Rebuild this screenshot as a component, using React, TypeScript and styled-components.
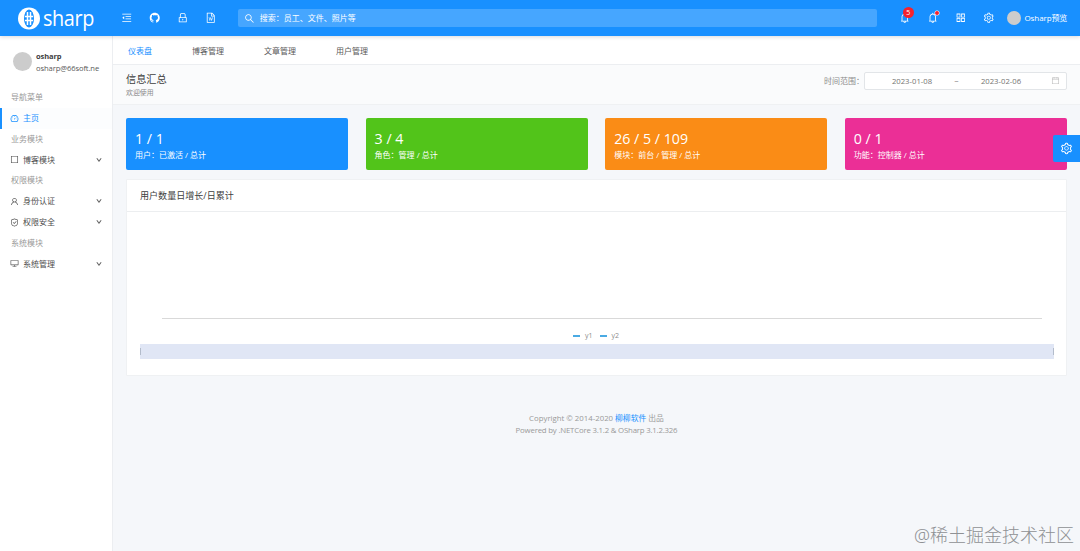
import React from "react";
import styled, { createGlobalStyle } from "styled-components";
import {
  AiOutlineMenuFold,
  AiOutlineGithub,
  AiOutlineLock,
  AiOutlineFileWord,
  AiOutlineSearch,
  AiOutlineBell,
  AiOutlineAppstore,
  AiOutlineSetting,
  AiOutlineDashboard,
  AiOutlineBorder,
  AiOutlineUser,
  AiOutlineSafety,
  AiOutlineDesktop,
  AiOutlineDown,
  AiOutlineCalendar,
} from "react-icons/ai";

const GlobalStyle = createGlobalStyle`
  * { box-sizing: border-box; }
  body {
    margin: 0;
    background: #f5f7fa;
    color: #595959;
    font: 8px/12px "Open Sans", "Noto Sans CJK SC", sans-serif;
    overflow: hidden;
  }
  svg { display: block; flex: none; }
`;

const Page = styled.div`
  display: flex;
  flex-direction: column;
  width: 1080px;
  height: 551px;
`;

const Header = styled.header`
  display: flex;
  align-items: center;
  flex: none;
  height: 36px;
  background: #1890ff;
  color: #fff;
  position: relative;
  z-index: 2;
  box-shadow: 0 1px 4px rgba(0, 21, 41, 0.16);
`;

const Brand = styled.div`
  display: flex;
  align-items: center;
  width: 112px;
  height: 36px;
  padding-left: 18px;
`;

const BrandName = styled.span`
  margin: -3px 0 0 3px;
  font: 22px/30px "Open Sans", sans-serif;
  letter-spacing: -0.4px;
  transform: scaleX(0.9);
  transform-origin: left center;
`;

const IconRow = styled.div`
  display: flex;
  align-items: center;
`;

const IconCell = styled.div`
  position: relative;
  display: flex;
  align-items: center;
  justify-content: center;
  width: 28.2px;
  height: 36px;
  padding-left: 1px;
`;

const SearchBox = styled.div`
  display: flex;
  align-items: center;
  gap: 5px;
  width: 639px;
  height: 18px;
  margin: 0 13px 0 13px;
  padding-left: 6px;
  background: #46a6ff;
  border-radius: 2px;
`;

const CountBadge = styled.span`
  position: absolute;
  left: 13px;
  top: 7px;
  width: 11px;
  height: 11px;
  border-radius: 50%;
  background: #f5222d;
  font-size: 7px;
  line-height: 11px;
  text-align: center;
`;

const DotBadge = styled.span`
  position: absolute;
  left: 17px;
  top: 11px;
  width: 4px;
  height: 4px;
  border-radius: 50%;
  background: #f5222d;
  box-shadow: 0 0 0 0.5px #fff;
`;

const Avatar = styled.span<{ $size: number }>`
  flex: none;
  width: ${(p) => p.$size}px;
  height: ${(p) => p.$size}px;
  border-radius: 50%;
  background: #ccc;
`;

const Account = styled.div`
  display: flex;
  align-items: center;
  gap: 4px;
  margin-left: 4px;
  white-space: nowrap;
  span { letter-spacing: -0.1px; }
`;

const Body = styled.div`
  display: flex;
  flex: 1;
  min-height: 0;
`;

const Sidebar = styled.aside`
  flex: none;
  width: 113px;
  background: #fff;
  border-right: 1px solid #eceef1;
`;

const Profile = styled.div`
  display: flex;
  align-items: center;
  gap: 4px;
  height: 51px;
  padding-left: 13px;
  white-space: nowrap;
`;

const ProfileText = styled.div`
  display: flex;
  flex-direction: column;
  font-size: 7.6px;
  letter-spacing: -0.1px;
  b { color: #404040; font-size: 7.5px; }
`;

const MenuGroup = styled.div`
  height: 20.8px;
  padding-left: 11px;
  line-height: 20.8px;
  color: #999;
`;

const MenuItem = styled.div<{ $active?: boolean }>`
  display: flex;
  align-items: center;
  gap: 4px;
  height: 20.8px;
  padding: 0 10px 0 ${(p) => (p.$active ? 8 : 10)}px;
  border-left: ${(p) => (p.$active ? "2px solid #1890ff" : "0")};
  background: ${(p) => (p.$active ? "#fcfdfe" : "#fff")};
  color: ${(p) => (p.$active ? "#1890ff" : "#4d4d4d")};
  span { flex: 1; }
`;

const Main = styled.main`
  flex: 1;
  min-width: 0;
`;

const Tabs = styled.nav`
  display: flex;
  height: 29px;
  padding-left: 15px;
  background: #fff;
  border-bottom: 1px solid #eceef1;
`;

const Tab = styled.span<{ $active?: boolean; $width: number }>`
  width: ${(p) => p.$width}px;
  line-height: 29px;
  color: ${(p) => (p.$active ? "#1890ff" : "#595959")};
`;

const TitleBar = styled.section`
  display: flex;
  justify-content: space-between;
  height: 40px;
  padding: 6px 13px 0;
  background: #fafbfc;
  border-bottom: 1px solid #eff1f3;
`;

const Title = styled.h1`
  margin: 0;
  font-size: 10.2px;
  line-height: 17px;
  font-weight: 400;
  color: #404040;
`;

const Subtitle = styled.p`
  margin: 0;
  font-size: 6.9px;
  line-height: 10px;
  color: #8c8c8c;
`;

const Range = styled.div`
  display: flex;
  align-items: center;
  height: 19px;
  color: #8c8c8c;
`;

const RangeInput = styled.div`
  display: grid;
  grid-template-columns: 82px 7px 82px 1fr;
  align-items: center;
  width: 203px;
  height: 18px;
  padding: 0 6px;
  background: #fff;
  border: 1px solid #e2e5e8;
  border-radius: 2px;
  text-align: center;
  font-size: 7.7px;
  color: #737373;
  svg { justify-self: end; color: #bfbfbf; }
`;

const Content = styled.div`
  padding: 13px 13px 0;
`;

const Stats = styled.div`
  display: grid;
  grid-template-columns: repeat(4, 1fr);
  gap: 17.4px;
`;

const StatCard = styled.div<{ $color: string }>`
  height: 52px;
  padding: 11px 9px 0;
  border-radius: 2px;
  background: ${(p) => p.$color};
  color: #fff;
`;

const StatValue = styled.div`
  font-size: 14.2px;
  line-height: 20px;
`;

const Panel = styled.section`
  height: 197px;
  margin-top: 9px;
  background: #fff;
  border: 1px solid #eff1f3;
  border-radius: 1px;
`;

const PanelTitle = styled.h2`
  height: 32px;
  margin: 0;
  padding-left: 13px;
  border-bottom: 1px solid #eceef0;
  font-size: 9.05px;
  font-weight: 400;
  line-height: 32px;
  color: #404040;
`;

const PlotArea = styled.div`
  height: 107px;
  margin: 0 24px 0 35px;
  border-bottom: 1px solid #d9d9d9;
`;

const Legend = styled.div`
  display: flex;
  justify-content: center;
  gap: 7px;
  height: 25px;
  padding: 11px 1px 0 0;
  font-size: 7px;
  line-height: 12px;
  color: #8c8c8c;
`;

const LegendItem = styled.span`
  display: flex;
  align-items: center;
  height: 12px;
  gap: 5px;
  &::before {
    content: "";
    width: 7px;
    height: 2px;
    background: #4aaae3;
  }
`;

const Scroller = styled.div`
  display: flex;
  justify-content: space-between;
  align-items: center;
  height: 15px;
  margin: 0 12px 0 13px;
  background: #e0e6f5;
  &::before, &::after {
    content: "";
    width: 1px;
    height: 7px;
    background: #b3bccb;
  }
`;

const Footer = styled.footer`
  margin-top: 36px;
  text-align: center;
  font-size: 7.8px;
  color: #999;
  a { color: #1890ff; }
`;

const FooterLine = styled.div<{ $tracking?: number }>`
  letter-spacing: ${(p) => p.$tracking ?? 0}px;
`;

const SettingsHandle = styled.div`
  position: absolute;
  z-index: 3;
  left: 1053px;
  top: 135px;
  display: flex;
  align-items: center;
  justify-content: center;
  width: 27px;
  height: 27px;
  border-radius: 2px 0 0 2px;
  background: #1890ff;
  color: #fff;
`;

const Watermark = styled.div`
  position: absolute;
  right: 6px;
  top: 522px;
  font: 300 18px/26px "Noto Sans", "Noto Sans CJK SC", sans-serif;
  color: #8f9194;
  white-space: nowrap;
`;

const BrandMark = () => (
  <svg width="22" height="23" viewBox="0 0 22 23">
    <circle cx="11" cy="11.5" r="11" fill="#fff" />
    <ellipse cx="11" cy="11.5" rx="5" ry="9" fill="#1890ff" />
    <path
      d="M9.5 5v13M12.5 5v13M7 9.5h8M7 13.5h8"
      stroke="#fff"
      strokeWidth="1.5"
      fill="none"
    />
  </svg>
);

const menu = [
  { group: "导航菜单" },
  { label: "主页", icon: AiOutlineDashboard, active: true },
  { group: "业务模块" },
  { label: "博客模块", icon: AiOutlineBorder },
  { group: "权限模块" },
  { label: "身份认证", icon: AiOutlineUser },
  { label: "权限安全", icon: AiOutlineSafety },
  { group: "系统模块" },
  { label: "系统管理", icon: AiOutlineDesktop },
];

const stats = [
  { value: "1 / 1", label: "用户：已激活 / 总计", color: "#1890ff" },
  { value: "3 / 4", label: "角色：管理 / 总计", color: "#52c41a" },
  { value: "26 / 5 / 109", label: "模块：前台 / 管理 / 总计", color: "#fa8c16" },
  { value: "0 / 1", label: "功能：控制器 / 总计", color: "#eb2f96" },
];

export default function App() {
  return (
    <Page>
      <GlobalStyle />
      <Header>
        <Brand>
          <BrandMark />
          <BrandName>sharp</BrandName>
        </Brand>
        <IconRow>
          {[AiOutlineMenuFold, AiOutlineGithub, AiOutlineLock, AiOutlineFileWord].map((Icon, i) => (
            <IconCell key={i}>
              <Icon size={11.5} />
            </IconCell>
          ))}
        </IconRow>
        <SearchBox>
          <AiOutlineSearch size={11} />
          <span>搜索：员工、文件、照片等</span>
        </SearchBox>
        <IconRow>
          <IconCell>
            <AiOutlineBell size={11.5} />
            <CountBadge>5</CountBadge>
          </IconCell>
          <IconCell>
            <AiOutlineBell size={11.5} />
            <DotBadge />
          </IconCell>
          <IconCell>
            <AiOutlineAppstore size={11.5} />
          </IconCell>
          <IconCell>
            <AiOutlineSetting size={11.5} />
          </IconCell>
        </IconRow>
        <Account>
          <Avatar $size={14} />
          <span>Osharp预览</span>
        </Account>
      </Header>
      <Body>
        <Sidebar>
          <Profile>
            <Avatar $size={19} />
            <ProfileText>
              <b>osharp</b>
              <span>osharp@66soft.ne</span>
            </ProfileText>
          </Profile>
          {menu.map(({ group, label, icon: Icon, active }) =>
            Icon ? (
              <MenuItem key={label} $active={active}>
                <Icon size={9} />
                <span>{label}</span>
                {!active && <AiOutlineDown size={6} strokeWidth={70} />}
              </MenuItem>
            ) : (
              <MenuGroup key={group}>{group}</MenuGroup>
            )
          )}
        </Sidebar>
        <Main>
          <Tabs>
            <Tab $width={64} $active>仪表盘</Tab>
            <Tab $width={72}>博客管理</Tab>
            <Tab $width={72}>文章管理</Tab>
            <Tab $width={72}>用户管理</Tab>
          </Tabs>
          <TitleBar>
            <div>
              <Title>信息汇总</Title>
              <Subtitle>欢迎使用</Subtitle>
            </div>
            <Range>
              <span>时间范围：</span>
              <RangeInput>
                <span>2023-01-08</span>
                <span>~</span>
                <span>2023-02-06</span>
                <AiOutlineCalendar size={9} />
              </RangeInput>
            </Range>
          </TitleBar>
          <Content>
            <Stats>
              {stats.map((s) => (
                <StatCard key={s.label} $color={s.color}>
                  <StatValue>{s.value}</StatValue>
                  <div>{s.label}</div>
                </StatCard>
              ))}
            </Stats>
            <Panel>
              <PanelTitle>用户数量日增长/日累计</PanelTitle>
              <PlotArea />
              <Legend>
                <LegendItem>y1</LegendItem>
                <LegendItem>y2</LegendItem>
              </Legend>
              <Scroller />
            </Panel>
            <Footer>
              <FooterLine>
                Copyright © 2014-2020 <a>柳柳软件</a> 出品
              </FooterLine>
              <FooterLine $tracking={-0.19}>
                Powered by .NETCore 3.1.2 &amp; OSharp 3.1.2.326
              </FooterLine>
            </Footer>
          </Content>
        </Main>
      </Body>
      <SettingsHandle>
        <AiOutlineSetting size={13} />
      </SettingsHandle>
      <Watermark>@稀土掘金技术社区</Watermark>
    </Page>
  );
}
